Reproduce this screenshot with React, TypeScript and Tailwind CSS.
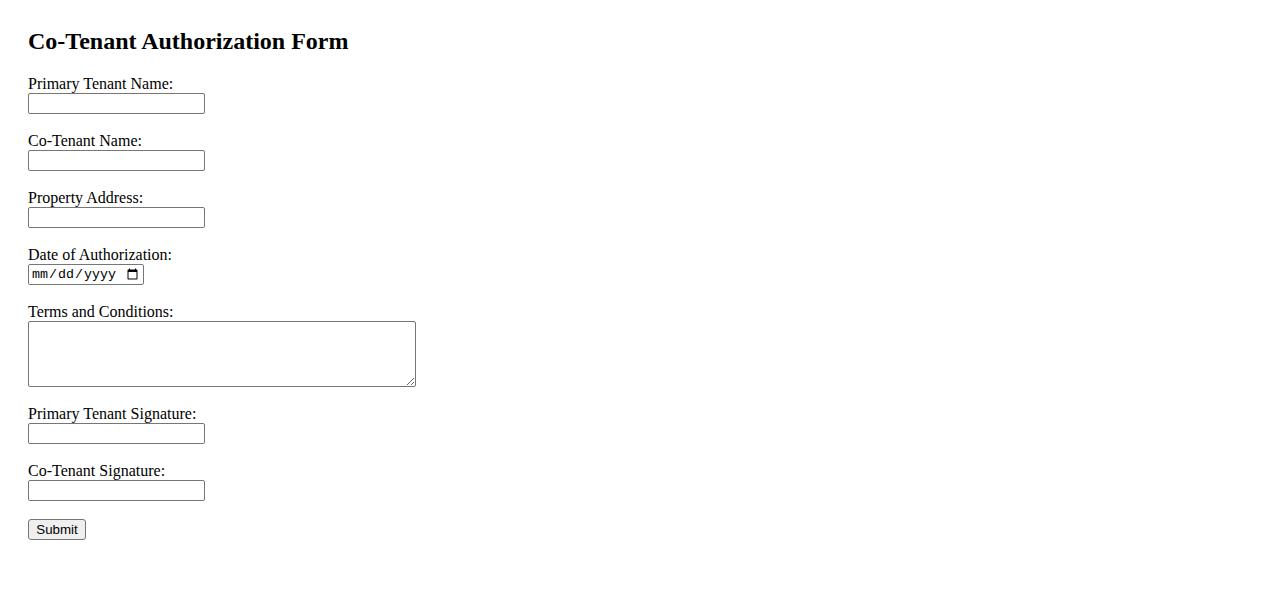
const fields = [
  { id: 'primaryTenant', label: 'Primary Tenant Name:', type: 'text' },
  { id: 'coTenant', label: 'Co-Tenant Name:', type: 'text' },
  { id: 'propertyAddress', label: 'Property Address:', type: 'text' },
  { id: 'authDate', label: 'Date of Authorization:', type: 'date' },
  { id: 'terms', label: 'Terms and Conditions:', type: 'textarea' },
  { id: 'primarySignature', label: 'Primary Tenant Signature:', type: 'text' },
  { id: 'coSignature', label: 'Co-Tenant Signature:', type: 'text' },
]

function Field({ id, label, type }: { id: string; label: string; type: string }) {
  return (
    <div className="mb-[19px] flex flex-col items-start">
      <label htmlFor={id} className="block pb-[2px] text-[16px] leading-[15px]">
        {label}
      </label>
      {type === 'textarea' ? (
        <textarea
          id={id}
          className="block h-[66px] w-[388px] rounded-[2px] border border-[#767676] bg-white px-[2px] py-[2px] font-['Liberation_Mono',monospace] text-[13.33px]"
        />
      ) : type === 'date' ? (
        <input
          id={id}
          type="date"
          className="block h-[21px] w-[116px] rounded-[2px] border border-[#767676] bg-white px-[2px] font-['Liberation_Mono',monospace] text-[13.33px] leading-[17px]"
        />
      ) : (
        <input
          id={id}
          type="text"
          className="block h-[21px] w-[177px] rounded-[2px] border border-[#767676] bg-white px-[2px] font-['Liberation_Sans',Arial,sans-serif] text-[13.33px]"
        />
      )}
    </div>
  )
}

export default function App() {
  return (
    <div className="min-h-screen bg-white pl-[28px] pt-[28px] font-['Liberation_Serif','Times_New_Roman',serif] text-black">
      <h2 className="mb-[21px] text-[24px] font-bold leading-[27px]">Co-Tenant Authorization Form</h2>
      <form onSubmit={(e) => e.preventDefault()}>
        {fields.map((f) => (
          <Field key={f.id} {...f} />
        ))}
        <button
          type="submit"
          className="-mt-px flex h-[21px] w-[58px] items-center justify-center rounded-[3px] border border-[#767676] bg-[#efefef] font-['Liberation_Sans',Arial,sans-serif] text-[13.33px] text-black"
        >
          Submit
        </button>
      </form>
    </div>
  )
}
